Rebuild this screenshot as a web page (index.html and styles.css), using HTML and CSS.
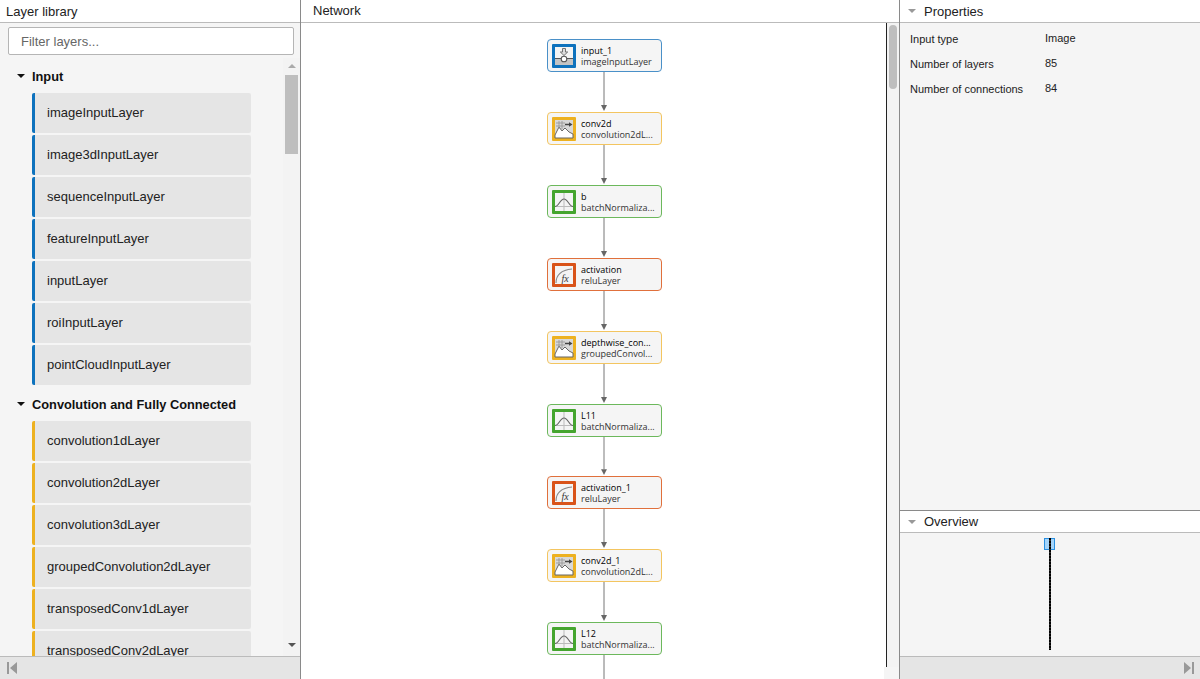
FILE: index.html
```html
<!DOCTYPE html>
<html lang="en">
<head>
  <meta charset="UTF-8">
  <title>Deep Network Designer</title>
  <link rel="stylesheet" href="styles.css">
</head>
<body>
  <!-- Icon definitions -->
  <svg class="defs">
    <symbol id="iconInput" viewBox="0 0 24 24">
      <rect x="3" y="3" width="18" height="18" fill="#f4f4f4"/>
      <rect x="3" y="15" width="18" height="6" fill="#c4c4c4"/>
      <path d="M3 14.500h6.500M14.500 14.500H21" stroke="#555" stroke-width="1.200" fill="none"/>
      <path d="M10.500 4.500h3V8h2.200L12 11.500 8.300 8h2.200z" fill="#ddd" stroke="#666" stroke-width=".9"/>
      <circle cx="12" cy="15" r="2.800" fill="#fff" stroke="#555" stroke-width="1.100"/>
    </symbol>
    <symbol id="iconConv" viewBox="0 0 24 24">
      <rect x="3" y="3" width="18" height="18" fill="#d8d8d8"/>
      <path d="M3 18l4-8 3 4 3-3 4 4 4 2v4H3z" fill="#fff" stroke="#666"/>
      <path d="M4 6h9M4 9h9M7 4v8M10 4v8" stroke="#999" stroke-width=".9" fill="none"/>
      <path d="M13 7.500h5" stroke="#444" stroke-width="1.300"/>
      <path d="M17 5.300l3.500 2.200-3.500 2.200z" fill="#444"/>
    </symbol>
    <symbol id="iconNorm" viewBox="0 0 24 24">
      <rect x="3" y="3" width="18" height="18" fill="#f4f4f4"/>
      <path d="M3 16.500h18M12 3v18" stroke="#bbb" fill="none"/>
      <path d="M3 16.500c4 0 5-7.500 9-7.500s5 7.500 9 7.500" stroke="#666" stroke-width="1.100" fill="none"/>
    </symbol>
    <symbol id="iconRelu" viewBox="0 0 24 24">
      <rect x="3" y="3" width="18" height="18" fill="#f4f4f4"/>
      <path d="M4 20c0-8 6-13 16-14" stroke="#888" stroke-width="1.100" fill="none"/>
      <text class="fx" x="9.500" y="18.500">fx</text>
    </symbol>
    <symbol id="edge" viewBox="0 0 12 40">
      <path d="M6 0v33" stroke="#777" fill="none"/>
      <path d="M3 33h6l-3 6z" fill="#666"/>
    </symbol>
  </svg>

  <div class="app">
    <!-- Layer library -->
    <div class="panel left">
      <div class="panel-title"><span>Layer library</span></div>
      <div class="filter"><input type="text" placeholder="Filter layers..."></div>
      <div class="library">
        <div class="groups">
          <h3 class="group-title"><i class="caret"></i>Input</h3>
          <div class="item blue">imageInputLayer</div>
          <div class="item blue">image3dInputLayer</div>
          <div class="item blue">sequenceInputLayer</div>
          <div class="item blue">featureInputLayer</div>
          <div class="item blue">inputLayer</div>
          <div class="item blue">roiInputLayer</div>
          <div class="item blue">pointCloudInputLayer</div>
          <h3 class="group-title"><i class="caret"></i>Convolution and Fully Connected</h3>
          <div class="item yellow">convolution1dLayer</div>
          <div class="item yellow">convolution2dLayer</div>
          <div class="item yellow">convolution3dLayer</div>
          <div class="item yellow">groupedConvolution2dLayer</div>
          <div class="item yellow">transposedConv1dLayer</div>
          <div class="item yellow">transposedConv2dLayer</div>
        </div>
        <div class="scrollbar-v">
          <i class="arrow-up"></i>
          <div class="thumb"></div>
          <i class="arrow-down"></i>
        </div>
      </div>
      <div class="panel-foot">
        <svg class="collapse" viewBox="0 0 10 12"><path d="M0 0h2v12H0zM10 0v12L3 6z"/></svg>
      </div>
    </div>

    <!-- Network -->
    <div class="panel middle">
      <div class="panel-title network-title"><span>Network</span></div>
      <div class="network">
        <div class="canvas">
          <div class="node n-blue">
            <svg class="icon"><use href="#iconInput"/></svg>
            <div class="node-text"><b>input_1</b><span>imageInputLayer</span></div>
          </div>
          <svg class="edge"><use href="#edge"/></svg>
          <div class="node n-yellow">
            <svg class="icon"><use href="#iconConv"/></svg>
            <div class="node-text"><b>conv2d</b><span>convolution2dL...</span></div>
          </div>
          <svg class="edge"><use href="#edge"/></svg>
          <div class="node n-green">
            <svg class="icon"><use href="#iconNorm"/></svg>
            <div class="node-text"><b>b</b><span>batchNormaliza...</span></div>
          </div>
          <svg class="edge"><use href="#edge"/></svg>
          <div class="node n-orange">
            <svg class="icon"><use href="#iconRelu"/></svg>
            <div class="node-text"><b>activation</b><span>reluLayer</span></div>
          </div>
          <svg class="edge"><use href="#edge"/></svg>
          <div class="node n-yellow">
            <svg class="icon"><use href="#iconConv"/></svg>
            <div class="node-text"><b>depthwise_con...</b><span>groupedConvol...</span></div>
          </div>
          <svg class="edge"><use href="#edge"/></svg>
          <div class="node n-green">
            <svg class="icon"><use href="#iconNorm"/></svg>
            <div class="node-text"><b>L11</b><span>batchNormaliza...</span></div>
          </div>
          <svg class="edge edge-short"><use href="#edge"/></svg>
          <div class="node n-orange">
            <svg class="icon"><use href="#iconRelu"/></svg>
            <div class="node-text"><b>activation_1</b><span>reluLayer</span></div>
          </div>
          <svg class="edge"><use href="#edge"/></svg>
          <div class="node n-yellow">
            <svg class="icon"><use href="#iconConv"/></svg>
            <div class="node-text"><b>conv2d_1</b><span>convolution2dL...</span></div>
          </div>
          <svg class="edge"><use href="#edge"/></svg>
          <div class="node n-green">
            <svg class="icon"><use href="#iconNorm"/></svg>
            <div class="node-text"><b>L12</b><span>batchNormaliza...</span></div>
          </div>
          <svg class="edge"><use href="#edge"/></svg>
        </div>
        <div class="scrollbar-net"><div class="thumb-net"></div></div>
        <div class="corner"></div>
      </div>
    </div>

    <!-- Properties and overview -->
    <div class="panel right">
      <div class="panel-title side-title"><i class="caret-gray"></i><span>Properties</span></div>
      <div class="properties">
        <div class="prop"><span>Input type</span><b>Image</b></div>
        <div class="prop"><span>Number of layers</span><b>85</b></div>
        <div class="prop"><span>Number of connections</span><b>84</b></div>
      </div>
      <div class="panel-title side-title overview-title"><i class="caret-gray"></i><span>Overview</span></div>
      <div class="overview">
        <div class="minimap">
          <div class="viewport"></div>
        </div>
      </div>
      <div class="panel-foot foot-right">
        <svg class="collapse" viewBox="0 0 10 12"><path d="M10 0H8v12h2zM0 0v12L7 6z"/></svg>
      </div>
    </div>
  </div>
</body>
</html>
```

FILE: styles.css
```css
/* General styles */
* {
  margin: 0;
  padding: 0;
  box-sizing: border-box;
}
html, body {
  height: 100%;
  overflow: hidden;
}
body {
  font-family: "Liberation Sans", Arial, sans-serif;
  font-size: 13px;
  background-color: #f5f5f5;
  color: #222;
}
.defs {
  display: none;
}
.app {
  display: grid;
  grid-template-columns: 301px 599px 300px;
  height: 679px;
}
.panel {
  display: flex;
  flex-direction: column;
  min-height: 0;
  overflow: hidden;
  background-color: #f5f5f5;
}
.left, .middle {
  border-right: 1px solid #8a8a8a;
}
.panel-title {
  display: flex;
  align-items: center;
  flex: none;
  height: 23px;
  padding: 0 6px;
  font-size: 13px;
  background-color: #fff;
  border-bottom: 1px solid #bbb;
}
.network-title {
  padding-left: 12px;
  padding-bottom: 2px;
}
.side-title {
  padding-left: 8px;
}

/* Layer library */
.filter {
  flex: none;
  padding: 4px 6px 4px 8px;
}
.filter input {
  display: block;
  width: 100%;
  height: 28px;
  padding: 0 12px;
  font: 13px "Liberation Sans", Arial, sans-serif;
  background-color: #fff;
  border: 1px solid #b5b5b5;
  border-radius: 2px;
}
.filter input::placeholder {
  color: #666;
  opacity: 1;
}
.library {
  display: flex;
  flex: 1;
  min-height: 0;
}
.groups {
  flex: 1;
  min-width: 0;
  overflow: hidden;
}
.group-title {
  display: flex;
  align-items: center;
  height: 34px;
  padding-left: 17px;
  font-size: 12.800px;
  color: #111;
}
.caret {
  width: 0;
  height: 0;
  margin-right: 7px;
  border-top: 4px solid #111;
  border-left: 4px solid transparent;
  border-right: 4px solid transparent;
}
.item {
  display: flex;
  align-items: center;
  width: 219px;
  height: 40px;
  margin: 0 0 2px 32px;
  padding: 0 0 2px 12px;
  background-color: #e5e5e5;
  border-left: 3px solid #0e72bd;
  border-radius: 2px;
}
.item.yellow {
  border-left-color: #edb120;
}
.scrollbar-v {
  display: flex;
  flex-direction: column;
  align-items: center;
  flex: none;
  width: 17px;
  margin-top: -1px;
  padding: 6px 2px;
  background-color: #f3f3f3;
}
.thumb {
  width: 13px;
  height: 79px;
  margin-top: 7px;
  background-color: #bebebe;
}
.arrow-up, .arrow-down {
  width: 0;
  height: 0;
  border-left: 4px solid transparent;
  border-right: 4px solid transparent;
}
.arrow-up {
  border-bottom: 4px solid #aaa;
}
.arrow-down {
  margin-top: auto;
  margin-bottom: 3px;
  border-top: 4px solid #555;
}
.panel-foot {
  display: flex;
  align-items: center;
  flex: none;
  height: 23px;
  padding: 0 7px;
  background-color: #e5e5e5;
  border-top: 1px solid #bbb;
}
.foot-right {
  justify-content: flex-end;
  padding-right: 6px;
}
.collapse {
  width: 10px;
  height: 12px;
  fill: #999;
}

/* Network */
.network {
  position: relative;
  display: flex;
  flex: 1;
  min-height: 0;
  background-color: #fff;
}
.canvas {
  flex: 1;
  min-width: 0;
  padding: 16px 0 0 246px;
  overflow: hidden;
  border-right: 1px solid #222;
}
.scrollbar-net {
  flex: none;
  width: 12px;
  padding: 2px 2px;
  background-color: #f3f3f3;
}
.thumb-net {
  width: 8px;
  height: 64px;
  background-color: #bebebe;
  border-radius: 4px;
}
.corner {
  position: absolute;
  right: 0;
  bottom: 0;
  width: 15px;
  height: 12px;
  background-color: #f5f5f5;
}
.node {
  display: flex;
  align-items: center;
  width: 115px;
  height: 33px;
  padding-left: 4px;
  background-color: #f5f5f5;
  border: 1px solid #999;
  border-radius: 4px;
}
.node-text {
  display: flex;
  flex-direction: column;
  min-width: 0;
  margin-left: 5px;
  font-family: "Open Sans", sans-serif;
  font-size: 9px;
  line-height: 11px;
  white-space: nowrap;
}
.node-text b {
  font-weight: 400;
  color: #000;
}
.node-text span {
  color: #333;
}
.icon {
  flex: none;
  width: 24px;
  height: 24px;
  border-radius: 1px;
}
.edge {
  display: block;
  width: 12px;
  height: 40px;
  margin-left: 51px;
}
.edge-short {
  height: 39px;
}
.fx {
  font-family: "Liberation Serif", serif;
  font-size: 10px;
  font-style: italic;
  fill: #333;
}
.n-blue { border-color: #4a90c8; }
.n-blue .icon { background-color: #0e72bd; }
.n-yellow { border-color: #f3c560; }
.n-yellow .icon { background-color: #edb120; }
.n-green { border-color: #6cb85c; }
.n-green .icon { background-color: #45a52f; }
.n-orange { border-color: #e0703c; }
.n-orange .icon { background-color: #d95319; }

/* Properties */
.caret-gray {
  width: 0;
  height: 0;
  margin-right: 8px;
  border-top: 4px solid #999;
  border-left: 4px solid transparent;
  border-right: 4px solid transparent;
}
.properties {
  flex: 1;
  min-height: 0;
  padding-top: 3px;
}
.prop {
  display: flex;
  height: 25px;
  align-items: center;
  padding-left: 10px;
  font-size: 11px;
}
.prop span {
  width: 135px;
  padding-top: 1px;
}
.prop b {
  font-weight: 400;
  padding-bottom: 1px;
}
.overview-title {
  height: 23px;
  border-top: 1px solid #8a8a8a;
}
.overview {
  display: flex;
  justify-content: center;
  flex: none;
  height: 123px;
  padding-top: 5px;
  isolation: isolate;
}
.minimap {
  position: relative;
  width: 2px;
  height: 112px;
  background-image: repeating-linear-gradient(#000 0 2px, #333 2px 3px);
}
.viewport {
  position: absolute;
  z-index: -1;
  top: 0;
  left: -5px;
  width: 11px;
  height: 12px;
  background-color: #a5d5fb;
  border: 1px solid #2a8fe0;
}
```
